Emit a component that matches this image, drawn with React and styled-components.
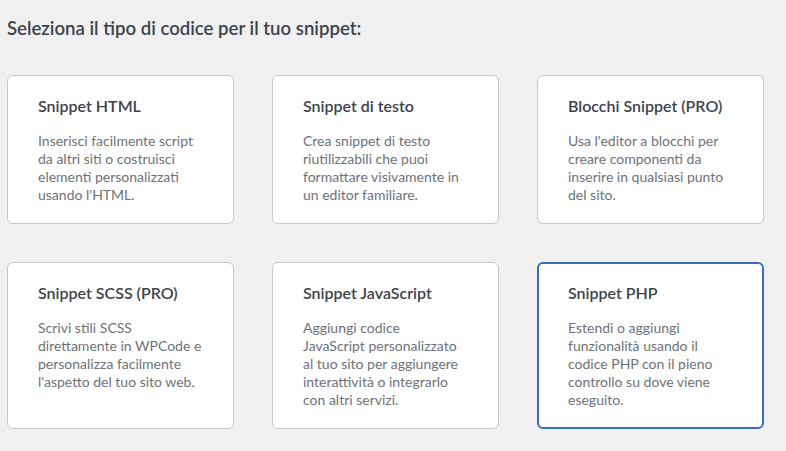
import React from "react";
import styled, { createGlobalStyle } from "styled-components";

const GlobalStyle = createGlobalStyle`
  html, body {
    margin: 0;
    padding: 0;
    background: #f0f0f1;
  }
  body {
    font-family: "Segoe UI", Lato, "Noto Sans", sans-serif;
    color: #3c434a;
  }
`;

const Page = styled.div`
  padding: 15px 23px 20px 7px;
`;

const Heading = styled.h2`
  margin: 0 0 34px 0;
  font-size: 18.6px;
  font-weight: 600;
  line-height: 26px;
  color: #3c434a;
`;

const Grid = styled.div`
  display: grid;
  grid-template-columns: repeat(3, 227px);
  column-gap: 38px;
  row-gap: 38px;
`;

const Card = styled.div`
  box-sizing: border-box;
  background: #fff;
  border: ${(p) => (p.$selected ? "2px solid #3a6bbd" : "1px solid #c8c9cc")};
  border-radius: 6px;
  padding: ${(p) => (p.$selected ? "19px 29px 18px 29px" : "20px 30px 19px")};
`;

const Title = styled.h3`
  margin: 0 0 16px 0;
  font-size: 16px;
  font-weight: 600;
  line-height: 20px;
  color: #3c434a;
`;

const Desc = styled.p`
  margin: 0;
  font-size: 14px;
  line-height: 18px;
  color: #6e7278;
`;

const Line = styled.span`
  display: block;
  white-space: nowrap;
`;

const types = [
  {
    title: "Snippet HTML",
    lines: ["Inserisci facilmente script", "da altri siti o costruisci", "elementi personalizzati", "usando l'HTML."],
  },
  {
    title: "Snippet di testo",
    lines: ["Crea snippet di testo", "riutilizzabili che puoi", "formattare visivamente in", "un editor familiare."],
  },
  {
    title: "Blocchi Snippet (PRO)",
    lines: ["Usa l'editor a blocchi per", "creare componenti da", "inserire in qualsiasi punto", "del sito."],
  },
  {
    title: "Snippet SCSS (PRO)",
    lines: ["Scrivi stili SCSS", "direttamente in WPCode e", "personalizza facilmente", "l'aspetto del tuo sito web."],
  },
  {
    title: "Snippet JavaScript",
    lines: [
      "Aggiungi codice",
      "JavaScript personalizzato",
      "al tuo sito per aggiungere",
      "interattività o integrarlo",
      "con altri servizi.",
    ],
  },
  {
    title: "Snippet PHP",
    lines: [
      "Estendi o aggiungi",
      "funzionalità usando il",
      "codice PHP con il pieno",
      "controllo su dove viene",
      "eseguito.",
    ],
    selected: true,
  },
];

export default function App() {
  return (
    <Page>
      <GlobalStyle />
      <Heading>Seleziona il tipo di codice per il tuo snippet:</Heading>
      <Grid>
        {types.map((t) => (
          <Card key={t.title} $selected={t.selected}>
            <Title>{t.title}</Title>
            <Desc>
              {t.lines.map((l) => (
                <Line key={l}>{l}</Line>
              ))}
            </Desc>
          </Card>
        ))}
      </Grid>
    </Page>
  );
}
